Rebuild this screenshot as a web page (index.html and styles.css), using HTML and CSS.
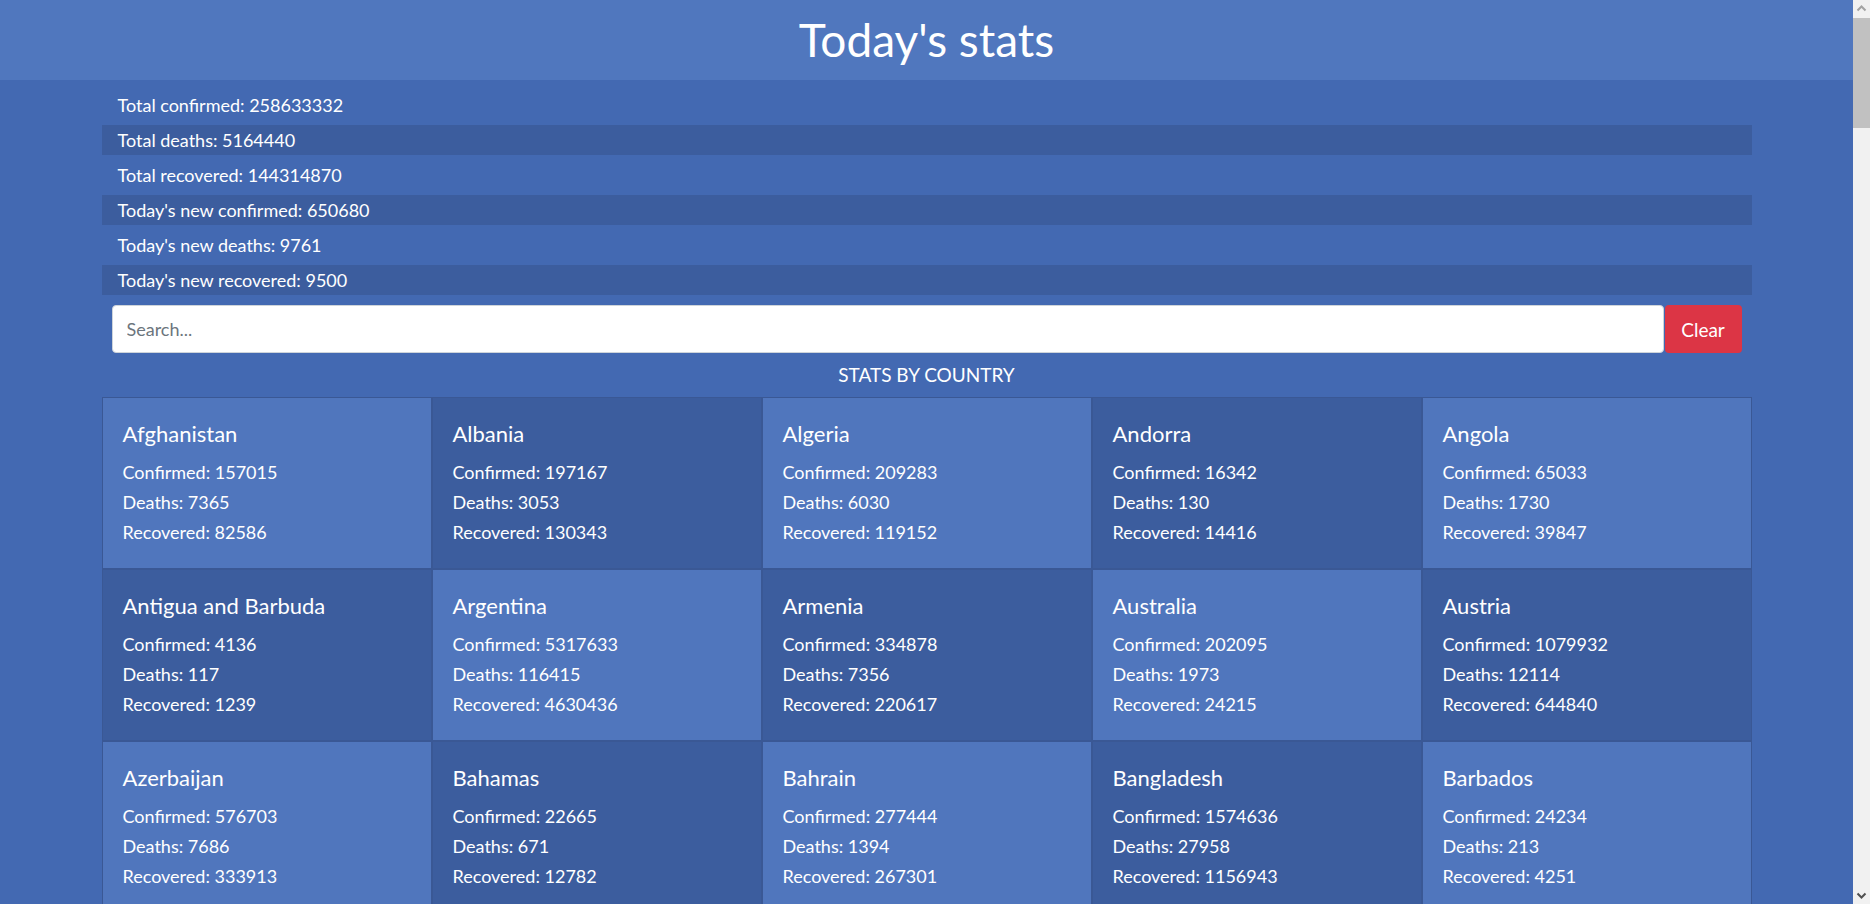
FILE: index.html
```html
<!DOCTYPE html>
<html lang="en">
<head>
<meta charset="utf-8">
<title>Today's stats</title>
<link rel="stylesheet" href="styles.css">
</head>
<body>
<div class="page">
  <header class="top">
    <h1 class="top-title">Today's stats</h1>
  </header>
  <main class="container">
    <ul class="totals">
      <li class="total">Total confirmed: 258633332</li>
      <li class="total">Total deaths: 5164440</li>
      <li class="total">Total recovered: 144314870</li>
      <li class="total">Today's new confirmed: 650680</li>
      <li class="total">Today's new deaths: 9761</li>
      <li class="total">Today's new recovered: 9500</li>
    </ul>
    <div class="search">
      <input class="search-input" type="text" placeholder="Search...">
      <button class="search-clear" type="button">Clear</button>
    </div>
    <h2 class="section-title">STATS BY COUNTRY</h2>
    <div class="grid">
      <div class="card"><h3 class="card-title">Afghanistan</h3><p class="card-line">Confirmed: 157015</p><p class="card-line">Deaths: 7365</p><p class="card-line">Recovered: 82586</p></div>
      <div class="card"><h3 class="card-title">Albania</h3><p class="card-line">Confirmed: 197167</p><p class="card-line">Deaths: 3053</p><p class="card-line">Recovered: 130343</p></div>
      <div class="card"><h3 class="card-title">Algeria</h3><p class="card-line">Confirmed: 209283</p><p class="card-line">Deaths: 6030</p><p class="card-line">Recovered: 119152</p></div>
      <div class="card"><h3 class="card-title">Andorra</h3><p class="card-line">Confirmed: 16342</p><p class="card-line">Deaths: 130</p><p class="card-line">Recovered: 14416</p></div>
      <div class="card"><h3 class="card-title">Angola</h3><p class="card-line">Confirmed: 65033</p><p class="card-line">Deaths: 1730</p><p class="card-line">Recovered: 39847</p></div>
      <div class="card"><h3 class="card-title">Antigua and Barbuda</h3><p class="card-line">Confirmed: 4136</p><p class="card-line">Deaths: 117</p><p class="card-line">Recovered: 1239</p></div>
      <div class="card"><h3 class="card-title">Argentina</h3><p class="card-line">Confirmed: 5317633</p><p class="card-line">Deaths: 116415</p><p class="card-line">Recovered: 4630436</p></div>
      <div class="card"><h3 class="card-title">Armenia</h3><p class="card-line">Confirmed: 334878</p><p class="card-line">Deaths: 7356</p><p class="card-line">Recovered: 220617</p></div>
      <div class="card"><h3 class="card-title">Australia</h3><p class="card-line">Confirmed: 202095</p><p class="card-line">Deaths: 1973</p><p class="card-line">Recovered: 24215</p></div>
      <div class="card"><h3 class="card-title">Austria</h3><p class="card-line">Confirmed: 1079932</p><p class="card-line">Deaths: 12114</p><p class="card-line">Recovered: 644840</p></div>
      <div class="card"><h3 class="card-title">Azerbaijan</h3><p class="card-line">Confirmed: 576703</p><p class="card-line">Deaths: 7686</p><p class="card-line">Recovered: 333913</p></div>
      <div class="card"><h3 class="card-title">Bahamas</h3><p class="card-line">Confirmed: 22665</p><p class="card-line">Deaths: 671</p><p class="card-line">Recovered: 12782</p></div>
      <div class="card"><h3 class="card-title">Bahrain</h3><p class="card-line">Confirmed: 277444</p><p class="card-line">Deaths: 1394</p><p class="card-line">Recovered: 267301</p></div>
      <div class="card"><h3 class="card-title">Bangladesh</h3><p class="card-line">Confirmed: 1574636</p><p class="card-line">Deaths: 27958</p><p class="card-line">Recovered: 1156943</p></div>
      <div class="card"><h3 class="card-title">Barbados</h3><p class="card-line">Confirmed: 24234</p><p class="card-line">Deaths: 213</p><p class="card-line">Recovered: 4251</p></div>
    </div>
  </main>
</div>
<aside class="scrollbar" aria-hidden="true">
  <svg class="scroll-arrow" width="17" height="17" viewBox="0 0 17 17"><path d="M4.5 10.5 L8.5 6.5 L12.5 10.5" fill="none" stroke="#a3a3a3" stroke-width="2"/></svg>
  <div class="scroll-track"><div class="scroll-thumb"></div></div>
  <svg class="scroll-arrow" width="17" height="17" viewBox="0 0 17 17"><path d="M4.5 6.5 L8.5 10.5 L12.5 6.5" fill="none" stroke="#505050" stroke-width="2"/></svg>
</aside>
</body>
</html>
```
FILE: styles.css
```css
html, body {
  margin: 0;
  padding: 0;
}
html {
  overflow: hidden;
}
body {
  background: #4369b2;
  color: #fff;
  font-family: "Lato", "Liberation Sans", sans-serif;
}
.page {
  margin-right: 17px;
}
.top {
  background: #5077be;
  height: 80px;
}
.top-title {
  margin: 0;
  text-align: center;
  font-size: 46px;
  font-weight: 400;
  line-height: 80px;
}
.container {
  width: 1650px;
  margin: 0 auto;
  padding-top: 10px;
}
.totals {
  list-style: none;
  margin: 0;
  padding: 0;
  display: flex;
  flex-direction: column;
  gap: 5px;
}
.total {
  height: 30px;
  line-height: 30px;
  font-size: 18px;
  padding-left: 16px;
}
.total:nth-child(even) {
  background: #3c5d9e;
}
.search {
  display: flex;
  gap: 1px;
  margin: 10px 10px 0 10px;
  height: 48px;
}
.search-input {
  flex: 1;
  border: 1px solid #ced4da;
  border-radius: 4px;
  background: #fff;
  padding: 0 14px;
  font-family: "Lato", "Liberation Sans", sans-serif;
  font-size: 18px;
  color: #495057;
  outline: none;
}
.search-input::placeholder {
  color: #6c757d;
}
.search-clear {
  width: 77px;
  border: none;
  border-radius: 4px;
  background: #dc3545;
  color: #fff;
  font-family: "Lato", "Liberation Sans", sans-serif;
  font-size: 19px;
  padding: 0;
}
.section-title {
  margin: 0;
  text-align: center;
  font-size: 19px;
  font-weight: 400;
  line-height: 44px;
}
.grid {
  display: grid;
  grid-template-columns: repeat(5, 1fr);
}
.card {
  background: #5076bd;
  border: 1px solid #3a5895;
  padding: 21px 20px 21px 20px;
}
.card:nth-child(even) {
  background: #3c5d9e;
}
.card-title {
  margin: 0 0 8px;
  font-size: 22px;
  font-weight: 400;
  line-height: 30px;
}
.card-line {
  margin: 0;
  font-size: 18px;
  line-height: 30px;
}
.scrollbar {
  position: fixed;
  top: 0;
  right: 0;
  width: 17px;
  height: 100vh;
  background: #f1f1f1;
  display: flex;
  flex-direction: column;
}
.scroll-arrow {
  flex: none;
  display: block;
}
.scroll-track {
  flex: 1;
  padding-top: 1px;
}
.scroll-thumb {
  height: 110px;
  background: #c1c1c1;
}
```
